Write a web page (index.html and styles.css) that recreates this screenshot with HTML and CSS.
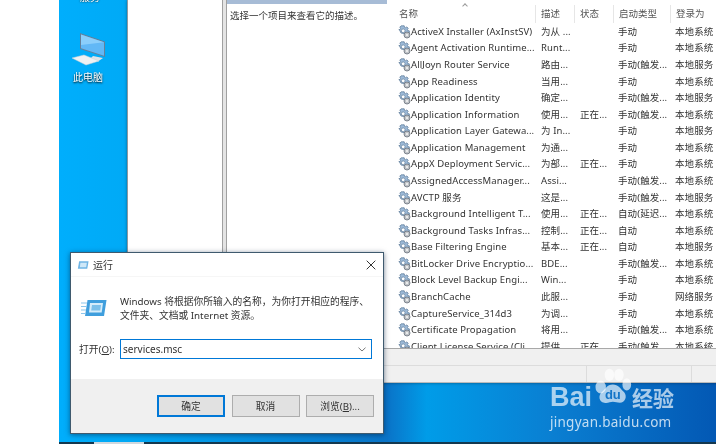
FILE: index.html
```html
<!DOCTYPE html>
<html lang="zh-CN">
<head>
<meta charset="utf-8">
<title>运行 services.msc</title>
<link rel="stylesheet" href="styles.css">
</head>
<body>
<svg class="defs" width="0" height="0" aria-hidden="true">
  <defs>
    <symbol id="gear" viewBox="0 0 14 14">
      <path d="M5.200.8h2l.3 1.500 1 .4L9.800 1.900l1.400 1.400-.8 1.300.4 1 1.500.3v2l-1.500.3-.4 1-.9-.2-5.500-1-1.300-2.800-.9-.6V4.600l1.400-.2.400-1-.800-1.300L4 .9z" fill="#9dbad8" stroke="#5f7d9c" stroke-width=".8"/>
      <circle cx="6.200" cy="5.800" r="1.900" fill="#fff" stroke="#6f89a3" stroke-width=".8"/>
      <circle cx="10" cy="10" r="3" fill="#bfc3c7" stroke="#737b84" stroke-width=".9"/>
      <circle cx="10" cy="10" r="1.100" fill="#f4f4f4"/>
    </symbol>
  </defs>
</svg>

<div class="screen">
  <div class="blank"></div>
  <main class="desktop">
    <div class="cut-label">服务</div>
    <div class="pc-icon">
      <svg width="36" height="34" viewBox="0 0 36 34">
        <path d="M23 24l10 2-5 3.500-8-2.500z" fill="#dfe3e7"/>
        <path d="M2 26l12-3 15 6-13 4z" fill="#eef1f3" stroke="#c9d0d6" stroke-width=".5"/>
        <path d="M10 1l25 8.500V25L10 17z" fill="#64809b"/>
        <path d="M11 2.600l23 7.700v13.400L11 16.300z" fill="#62b8f6"/>
        <path d="M11 2.600l23 7.700L11 13z" fill="#a6dcff" opacity=".6"/>
      </svg>
      <span>此电脑</span>
    </div>

    <section class="services">
      <div class="services-main">
        <div class="tree-pane"></div>
        <div class="splitter"></div>
        <div class="desc-pane">
          <div class="desc-head"></div>
          <p class="desc-text">选择一个项目来查看它的描述。</p>
        </div>
        <div class="list-pane">
          <div class="list-head">
            <span class="col-name">名称<i class="caret"></i></span>
            <span class="col-desc">描述</span>
            <span class="col-status">状态</span>
            <span class="col-type">启动类型</span>
            <span class="col-login">登录为</span>
          </div>
          <div class="rows">
            <div class="row"><svg class="gear"><use href="#gear"/></svg><span>ActiveX Installer (AxInstSV)</span><span>为从 ...</span><span></span><span>手动</span><span>本地系统</span></div>
            <div class="row"><svg class="gear"><use href="#gear"/></svg><span>Agent Activation Runtime...</span><span>Runt...</span><span></span><span>手动</span><span>本地系统</span></div>
            <div class="row"><svg class="gear"><use href="#gear"/></svg><span>AllJoyn Router Service</span><span>路由...</span><span></span><span>手动(触发...</span><span>本地服务</span></div>
            <div class="row"><svg class="gear"><use href="#gear"/></svg><span>App Readiness</span><span>当用...</span><span></span><span>手动</span><span>本地系统</span></div>
            <div class="row"><svg class="gear"><use href="#gear"/></svg><span>Application Identity</span><span>确定...</span><span></span><span>手动(触发...</span><span>本地服务</span></div>
            <div class="row"><svg class="gear"><use href="#gear"/></svg><span>Application Information</span><span>使用...</span><span>正在...</span><span>手动(触发...</span><span>本地系统</span></div>
            <div class="row"><svg class="gear"><use href="#gear"/></svg><span>Application Layer Gatewa...</span><span>为 In...</span><span></span><span>手动</span><span>本地服务</span></div>
            <div class="row"><svg class="gear"><use href="#gear"/></svg><span>Application Management</span><span>为通...</span><span></span><span>手动</span><span>本地系统</span></div>
            <div class="row"><svg class="gear"><use href="#gear"/></svg><span>AppX Deployment Servic...</span><span>为部...</span><span>正在...</span><span>手动</span><span>本地系统</span></div>
            <div class="row"><svg class="gear"><use href="#gear"/></svg><span>AssignedAccessManager...</span><span>Assi...</span><span></span><span>手动(触发...</span><span>本地系统</span></div>
            <div class="row"><svg class="gear"><use href="#gear"/></svg><span>AVCTP 服务</span><span>这是...</span><span></span><span>手动(触发...</span><span>本地服务</span></div>
            <div class="row"><svg class="gear"><use href="#gear"/></svg><span>Background Intelligent T...</span><span>使用...</span><span>正在...</span><span>自动(延迟...</span><span>本地系统</span></div>
            <div class="row"><svg class="gear"><use href="#gear"/></svg><span>Background Tasks Infras...</span><span>控制...</span><span>正在...</span><span>自动</span><span>本地系统</span></div>
            <div class="row"><svg class="gear"><use href="#gear"/></svg><span>Base Filtering Engine</span><span>基本...</span><span>正在...</span><span>自动</span><span>本地服务</span></div>
            <div class="row"><svg class="gear"><use href="#gear"/></svg><span>BitLocker Drive Encryptio...</span><span>BDE...</span><span></span><span>手动(触发...</span><span>本地系统</span></div>
            <div class="row"><svg class="gear"><use href="#gear"/></svg><span>Block Level Backup Engi...</span><span>Win...</span><span></span><span>手动</span><span>本地系统</span></div>
            <div class="row"><svg class="gear"><use href="#gear"/></svg><span>BranchCache</span><span>此服...</span><span></span><span>手动</span><span>网络服务</span></div>
            <div class="row"><svg class="gear"><use href="#gear"/></svg><span>CaptureService_314d3</span><span>为调...</span><span></span><span>手动</span><span>本地系统</span></div>
            <div class="row"><svg class="gear"><use href="#gear"/></svg><span>Certificate Propagation</span><span>将用...</span><span></span><span>手动(触发...</span><span>本地系统</span></div>
            <div class="row"><svg class="gear"><use href="#gear"/></svg><span>Client License Service (Cli</span><span>提供...</span><span>正在...</span><span>手动(触发...</span><span>本地系统</span></div>
          </div>
        </div>
      </div>
      <div class="tabs-strip"></div>
      <div class="status-bar">
        <span class="status-a"></span>
        <span class="status-b"></span>
        <span class="status-c"></span>
      </div>
    </section>

    <section class="run-dialog">
      <header class="run-title">
        <svg class="run-small" width="12" height="10" viewBox="0 0 14 11">
          <path d="M2.500 1h11l-1.500 9H1z" fill="#6fb4e4"/>
          <path d="M4 3h7.500l-.8 5H3.300z" fill="#cfe8f8"/>
        </svg>
        <span>运行</span>
        <svg class="run-close" width="10" height="10" viewBox="0 0 10 10">
          <path d="M.7.700l8.600 8.600M9.300.700L.7 9.300" stroke="#333" stroke-width="1" fill="none"/>
        </svg>
      </header>
      <div class="run-body">
        <div class="run-info">
          <svg width="26" height="20" viewBox="0 0 26 20">
            <path d="M6.500 2h19L23 18H4z" fill="#3f9edd"/>
            <path d="M9 5h13l-1.300 9.500H8z" fill="#d5ecfa"/>
            <path d="M11 7h9l-.8 5.500H10.200z" fill="#7cc0ea"/>
            <path d="M0 5h6M0 8.500h5.500M0 12h5M0 15.500h4.500" stroke="#8cc6ec" stroke-width="1.200"/>
          </svg>
          <p>Windows 将根据你所输入的名称，为你打开相应的程序、<br>文件夹、文档或 Internet 资源。</p>
        </div>
        <div class="run-open">
          <label>打开(<u>O</u>):</label>
          <div class="run-input">
            <span>services.msc</span>
            <svg width="8" height="5" viewBox="0 0 8 5"><path d="M.5.700L4 4l3.500-3.300" stroke="#777" fill="none"/></svg>
          </div>
        </div>
      </div>
      <footer class="run-foot">
        <button class="btn btn-default">确定</button>
        <button class="btn">取消</button>
        <button class="btn">浏览(<u>B</u>)...</button>
      </footer>
    </section>

    <div class="watermark">
      <div class="wm-top">
        <span class="wm-bai">Bai</span>
        <svg class="wm-paw" width="40" height="40" viewBox="0 0 46 44">
          <ellipse cx="10" cy="22" rx="6" ry="7.500"/>
          <ellipse cx="20" cy="8" rx="5.500" ry="7"/>
          <ellipse cx="31" cy="8" rx="5.500" ry="7"/>
          <ellipse cx="40" cy="19" rx="5" ry="7" />
          <path d="M24 19c6 0 9 5 13 9 4 5 1 12-5 12-3 0-5-1-8-1s-6 2-10 1c-6-1-7-8-3-12 4-3 6-9 13-9z"/>
          <text x="24" y="36" class="wm-du">du</text>
        </svg>
        <span class="wm-cn">经验</span>
      </div>
      <div class="wm-url">jingyan.baidu.com</div>
    </div>

    <div class="taskbar"><span class="task-a"></span><span class="task-b"></span><span class="task-c"></span></div>
  </main>
</div>
</body>
</html>
```
FILE: styles.css
```css
* { box-sizing: border-box; }
html, body { margin: 0; padding: 0; background: #fff; }
body {
  width: 716px; height: 444px; overflow: hidden;
  font-family: "Noto Sans", "Noto Sans CJK SC", sans-serif;
  font-size: 10px; color: #333;
}
.defs { position: absolute; }
.screen { display: flex; width: 716px; height: 444px; filter: blur(.45px); }
.blank { width: 59px; background: #fff; flex: none; }
.desktop {
  position: relative; flex: 1; overflow: hidden;
  background: linear-gradient(90deg, #00aefc 0%, #00aaf6 10%, #0a74c8 50%, #009ce8 56%, #0a7fd2 75%, #0358b4 100%);
}
.cut-label {
  position: absolute; left: 21px; top: -11px; color: #fff; font-size: 10px;
  text-shadow: 0 0 2px #000;
}
.pc-icon {
  position: absolute; left: 9px; top: 32px; width: 40px;
  display: flex; flex-direction: column; align-items: center; gap: 5px;
}
.pc-icon span { color: #fff; font-size: 10px; line-height: 12px; text-shadow: 0 1px 2px #000; white-space: nowrap; }

.services {
  position: absolute; left: 68px; top: 0; width: 600px; height: 383px;
  display: flex; flex-direction: column; background: #fff;
  border-left: 1px solid #8f989f;
  box-shadow: 0 0 3px rgba(0,0,0,.4);
}
.services-main { flex: none; height: 348px; display: flex; overflow: hidden; }
.tree-pane { width: 94px; flex: none; background: #fff; }
.splitter { width: 5px; flex: none; background: #e4e4e4; border-left: 1px solid #a0a0a0; border-right: 1px solid #a0a0a0; }
.desc-pane { width: 160px; flex: none; }
.desc-head { height: 4px; background: #a7bcd6; }
.desc-text { margin: 5px 0 0 3px; font-size: 9.5px; line-height: 13px; white-space: nowrap; }
.list-pane { flex: 1; min-width: 0; padding-left: 10px; }
.list-head {
  position: relative; height: 23.5px; padding-top: 5px;
  display: grid; grid-template-columns: 139px 39px 39px 57px 60px; color: #555; font-size: 9.5px; line-height: 18px;
}
.list-head span { border-right: 1px solid #e6e6e6; height: 18px; white-space: nowrap; padding-left: 5px; }
.list-head .col-name { padding-left: 2px; }
.list-head .col-login { border-right: 0; }
.caret {
  position: absolute; left: 66px; top: 4px; width: 4px; height: 4px;
  border-left: 1px solid #999; border-top: 1px solid #999; transform: rotate(45deg);
}
.rows { display: grid; grid-auto-rows: 16.58px; }
.row {
  display: grid; grid-template-columns: 14px 130px 39px 38px 57px 60px;
  align-items: center; white-space: nowrap; font-size: 9.5px; line-height: 16px; letter-spacing: .01em;
}
.row span { overflow: hidden; }
.gear { width: 14px; height: 14px; }

.tabs-strip { height: 18px; flex: none; background: #f0f0f0; border-top: 1px solid #a8a8a8; border-bottom: 1px solid #dcdcdc; }
.status-bar { flex: 1; display: flex; background: #f0f0f0; border-bottom: 1px solid #bbb; }
.status-a { width: 459px; border-right: 1px solid #dcdcdc; }
.status-b { width: 105px; border-right: 1px solid #dcdcdc; }
.status-c { flex: 1; }

.run-dialog {
  position: absolute; left: 11px; top: 252px; width: 314px; height: 182px;
  background: #fff; border: 1px solid #3f5a6e;
  box-shadow: 0 1px 5px rgba(0,30,60,.55);
  display: flex; flex-direction: column;
}
.run-title { height: 24px; flex: none; display: flex; align-items: center; padding: 0 7px 0 6px; gap: 4px; font-size: 10px; border-bottom: 1px solid #f6f6f6; }
.run-small { flex: none; }
.run-close { margin-left: auto; }
.run-body { flex: 1; padding: 18px 11px 0 10px; }
.run-info { display: flex; gap: 13px; align-items: flex-start; }
.run-info svg { margin-top: 3px; flex: none; }
.run-info p { margin: 0; font-size: 9.75px; line-height: 14px; white-space: nowrap; }
.run-open { display: flex; align-items: center; margin-top: 16px; gap: 4px; }
.run-open label { width: 37px; flex: none; margin-left: -2px; font-size: 9.75px; white-space: nowrap; }
.run-input {
  flex: 1; height: 20px; border: 1px solid #0078d7; padding: 0 2px; font-size: 10px;
  display: flex; align-items: center; justify-content: space-between; background: #fff;
}
.run-input svg { margin-right: 3px; }
.run-foot {
  height: 54px; flex: none; background: #f0f0f0; display: flex; justify-content: flex-end;
  gap: 6.5px; padding: 16px 9px 0 0;
}
.btn {
  width: 68px; height: 22px; padding: 0; background: #e1e1e1; border: 1px solid #adadad; border-radius: 0;
  font: inherit; font-size: 9.75px; color: #333;
}
.btn-default { border: 2px solid #0078d7; }

.watermark { position: absolute; left: 491px; top: 367px; color: rgba(255,255,255,.66); width: 130px; }
.wm-top { display: flex; align-items: center; height: 44px; }
.wm-bai { font-family: "Liberation Sans", sans-serif; font-weight: 700; font-size: 27px; line-height: 30px; margin-top: 15px; }
.wm-paw { flex: none; margin-top: -4px; fill: rgba(255,255,255,.66); }
.wm-du { font-family: "Liberation Sans", sans-serif; font-size: 15px; font-weight: 700; fill: #1475c8; text-anchor: middle; }
.wm-cn { font-family: "Noto Sans CJK SC", sans-serif; font-weight: 700; font-size: 21px; line-height: 24px; margin-top: 15px; white-space: nowrap; }
.wm-url { font-size: 13.5px; line-height: 16px; letter-spacing: .02em; white-space: nowrap; margin-top: 3px; color: rgba(255,255,255,.75); }

.taskbar { position: absolute; left: 0; right: 0; bottom: 0; height: 2px; display: flex; background: #14384f; }
.task-a { width: 35px; }
.task-b { width: 50px; background: #cfd8de; }
.task-c { flex: 1; }
```
